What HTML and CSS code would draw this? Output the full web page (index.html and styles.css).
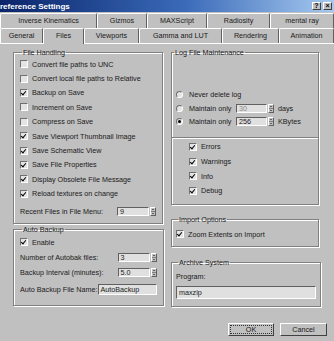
FILE: index.html
```html
<!DOCTYPE html>
<html lang="en">
<head>
    <meta charset="UTF-8">
    <title>Preference Settings</title>
    <link rel="stylesheet" href="styles.css">
</head>
<body>
    <div class="window">
        <div class="titlebar">
            <span class="title">reference Settings</span>
            <div class="caption-btns">
                <span class="cbtn">?</span>
                <span class="cbtn">&#215;</span>
            </div>
        </div>

        <div class="tabs">
            <div class="tab-row back">
                <div class="tab w97">Inverse Kinematics</div>
                <div class="tab w50">Gizmos</div>
                <div class="tab w60">MAXScript</div>
                <div class="tab w63">Radiosity</div>
                <div class="tab w64">mental ray</div>
            </div>
            <div class="tab-row front">
                <div class="tab w43">General</div>
                <div class="tab w41 active">Files</div>
                <div class="tab w55">Viewports</div>
                <div class="tab w83">Gamma and LUT</div>
                <div class="tab w57">Rendering</div>
                <div class="tab w55">Animation</div>
            </div>
        </div>

        <div class="page">
            <div class="columns">
                <div class="col">
                    <fieldset class="group file-handling">
                        <legend>File Handling</legend>
                        <div class="row"><span class="box"></span>Convert file paths to UNC</div>
                        <div class="row"><span class="box"></span>Convert local file paths to Relative</div>
                        <div class="row"><span class="box on"></span>Backup on Save</div>
                        <div class="row"><span class="box"></span>Increment on Save</div>
                        <div class="row"><span class="box"></span>Compress on Save</div>
                        <div class="row"><span class="box on"></span>Save Viewport Thumbnail Image</div>
                        <div class="row"><span class="box on"></span>Save Schematic View</div>
                        <div class="row"><span class="box on"></span>Save File Properties</div>
                        <div class="row"><span class="box on"></span>Display Obsolete File Message</div>
                        <div class="row"><span class="box on"></span>Reload textures on change</div>
                        <div class="row field-row recent">
                            <span class="lbl">Recent Files in File Menu:</span>
                            <span class="spinner"><span class="field">9</span><span class="arrows"></span></span>
                        </div>
                    </fieldset>

                    <fieldset class="group auto-backup">
                        <legend>Auto Backup</legend>
                        <div class="row r15"><span class="box on"></span>Enable</div>
                        <div class="row field-row r15">
                            <span class="lbl">Number of Autobak files:</span>
                            <span class="spinner"><span class="field">3</span><span class="arrows"></span></span>
                        </div>
                        <div class="row field-row r16">
                            <span class="lbl">Backup Interval (minutes):</span>
                            <span class="spinner"><span class="field">5.0</span><span class="arrows"></span></span>
                        </div>
                        <div class="row field-row r17">
                            <span class="lbl">Auto Backup File Name:</span>
                            <span class="field wide">AutoBackup</span>
                        </div>
                    </fieldset>
                </div>

                <div class="col">
                    <fieldset class="group log-file">
                        <legend>Log File Maintenance</legend>
                        <div class="radios">
                            <div class="row radio-row"><span class="radio"></span>Never delete log</div>
                            <div class="row radio-row">
                                <span class="radio"></span><span class="rlbl">Maintain only</span>
                                <span class="spinner small"><span class="field dim">30</span><span class="arrows"></span></span>
                                <span class="unit">days</span>
                            </div>
                            <div class="row radio-row">
                                <span class="radio on"></span><span class="rlbl">Maintain only</span>
                                <span class="spinner small"><span class="field">256</span><span class="arrows"></span></span>
                                <span class="unit">KBytes</span>
                            </div>
                        </div>
                        <div class="levels">
                            <div class="row"><span class="box on"></span>Errors</div>
                            <div class="row"><span class="box on"></span>Warnings</div>
                            <div class="row"><span class="box on"></span>Info</div>
                            <div class="row"><span class="box on"></span>Debug</div>
                        </div>
                    </fieldset>

                    <fieldset class="group import-options">
                        <legend>Import Options</legend>
                        <div class="row"><span class="box on"></span>Zoom Extents on Import</div>
                    </fieldset>

                    <fieldset class="group archive">
                        <legend>Archive System</legend>
                        <div class="prog-label">Program:</div>
                        <div class="field full">maxzip</div>
                    </fieldset>
                </div>
            </div>

            <div class="buttons">
                <button class="btn default">OK</button>
                <button class="btn">Cancel</button>
            </div>
        </div>
    </div>
</body>
</html>
```

FILE: styles.css
```css
* {
    margin: 0;
    padding: 0;
    box-sizing: border-box;
}

body {
    background: #c0c0c0;
    font-family: 'Liberation Sans', Arial, sans-serif;
    font-size: 7.2px;
    color: #1a1a1a;
    width: 334px;
    height: 341px;
    overflow: hidden;
}

.window {
    width: 334px;
}

/* title bar */
.titlebar {
    height: 12px;
    background: linear-gradient(to right, #0a246a, #3a6ab8 55%, #a6caf0);
    display: flex;
    align-items: center;
    justify-content: space-between;
}

.title {
    color: #fff;
    font-weight: bold;
    font-size: 8px;
}

.caption-btns {
    display: flex;
    gap: 2px;
    padding-right: 2px;
}

.cbtn {
    width: 9px;
    height: 8px;
    background: #c0c0c0;
    border: 1px solid;
    border-color: #fff #404040 #404040 #fff;
    font-size: 7px;
    font-weight: bold;
    line-height: 6px;
    text-align: center;
    color: #000;
}

/* tabs */
.tabs {
    padding-top: 1px;
}

.tab-row {
    display: flex;
}

.tab-row.back {
    height: 15px;
}

.tab-row.front {
    height: 16px;
    border-bottom: 1px solid #fff;
}

.tab {
    border-top: 1px solid #fff;
    border-left: 1px solid #fff;
    border-right: 1px solid #606060;
    border-radius: 2px 2px 0 0;
    text-align: center;
    line-height: 13px;
    white-space: nowrap;
}

.tab.active {
    margin-bottom: -1px;
    background: #c0c0c0;
    position: relative;
}

.w97 { width: 97px; }
.w50 { width: 50px; }
.w60 { width: 60px; }
.w63 { width: 63px; }
.w64 { width: 64px; }
.w43 { width: 43px; }
.w41 { width: 41px; }
.w55 { width: 55px; }
.w83 { width: 83px; }
.w57 { width: 57px; }

/* page */
.page {
    padding: 4px 15px 0 13px;
}

.columns {
    display: grid;
    grid-template-columns: 150px 148px;
    gap: 8px;
}

.col {
    display: flex;
    flex-direction: column;
}

.group {
    border: 1px solid #808080;
    box-shadow: 1px 1px 0 #fff, inset 1px 1px 0 #fff;
    padding: 0 6px;
}

.group legend {
    margin-left: 2px;
    padding: 0 1px;
    line-height: 9px;
}

.row {
    display: flex;
    align-items: center;
    height: 14.4px;
    white-space: nowrap;
}

.box {
    width: 8px;
    height: 8px;
    margin-right: 4px;
    background: #e4e4e4;
    border: 1px solid;
    border-color: #707070 #fff #fff #707070;
    position: relative;
    flex: none;
}

.box.on::after {
    content: '';
    position: absolute;
    left: 1px;
    top: 0;
    width: 2px;
    height: 4px;
    border: solid #000;
    border-width: 0 1.5px 1.5px 0;
    transform: rotate(40deg);
}

.field-row {
    justify-content: space-between;
}

.spinner {
    display: flex;
    align-items: center;
    gap: 1px;
}

.field {
    display: block;
    width: 32px;
    height: 9px;
    background: #e0e0e0;
    border: 1px solid;
    border-color: #606060 #fff #fff #606060;
    line-height: 7px;
    padding-left: 2px;
}

.field.dim {
    color: #888;
}

.arrows {
    width: 6px;
    height: 9px;
    background: linear-gradient(#c0c0c0 45%, #808080 45%, #808080 55%, #c0c0c0 55%);
    border: 1px solid;
    border-color: #fff #606060 #606060 #fff;
    position: relative;
}

.arrows::before,
.arrows::after {
    content: '';
    position: absolute;
    left: 1px;
    border-left: 1px solid transparent;
    border-right: 1px solid transparent;
}

.arrows::before {
    top: 1px;
    border-bottom: 1.5px solid #000;
}

.arrows::after {
    bottom: 1px;
    border-top: 1.5px solid #000;
}

.file-handling {
    padding-bottom: 4px;
}

.recent {
    margin-top: 4px;
    height: 14px;
}

.auto-backup {
    margin-top: 1px;
    padding-top: 1px;
    padding-bottom: 7px;
}

.r15 { height: 15px; }
.r16 { height: 16px; }
.r17 { height: 17px; }

.field.wide {
    width: 59px;
    height: 11px;
    line-height: 9px;
}

/* log file maintenance */
.log-file {
    padding: 0;
}

.radios {
    padding: 31px 0 8px 4px;
}

.radio-row {
    height: 13.5px;
}

.radio {
    width: 7px;
    height: 7px;
    border-radius: 50%;
    background: #e4e4e4;
    border: 1px solid;
    border-color: #707070 #fff #fff #707070;
    margin-right: 6px;
    flex: none;
    position: relative;
}

.radio.on::after {
    content: '';
    position: absolute;
    left: 1px;
    top: 1px;
    width: 3px;
    height: 3px;
    border-radius: 50%;
    background: #000;
}

.rlbl {
    width: 47px;
}

.spinner.small .field {
    width: 31px;
}

.unit {
    margin-left: 4px;
}

.levels {
    border-top: 1px solid #808080;
    box-shadow: inset 0 1px 0 #fff;
    padding: 2px 0 6px 17px;
}

.levels .row {
    height: 14.7px;
}

.import-options {
    margin-top: 10px;
    padding: 3px 4px 5px;
}

.import-options .row {
    height: 14px;
}

.archive {
    margin-top: 11px;
    padding: 0 4px 7px;
}

.prog-label {
    line-height: 13px;
    padding-top: 3px;
    margin-bottom: 3px;
}

.field.full {
    width: 140px;
    height: 13px;
    line-height: 11px;
}

/* buttons */
.buttons {
    display: flex;
    justify-content: flex-end;
    gap: 6px;
    margin-top: 16px;
    margin-right: -8px;
}

.btn {
    width: 47px;
    height: 13px;
    background: #c0c0c0;
    font-family: inherit;
    font-size: 7.2px;
    color: #1a1a1a;
    border: 1px solid;
    border-color: #fff #404040 #404040 #fff;
}

.btn.default {
    width: 46px;
    outline: 1px dotted #333;
    outline-offset: -3px;
}
```
